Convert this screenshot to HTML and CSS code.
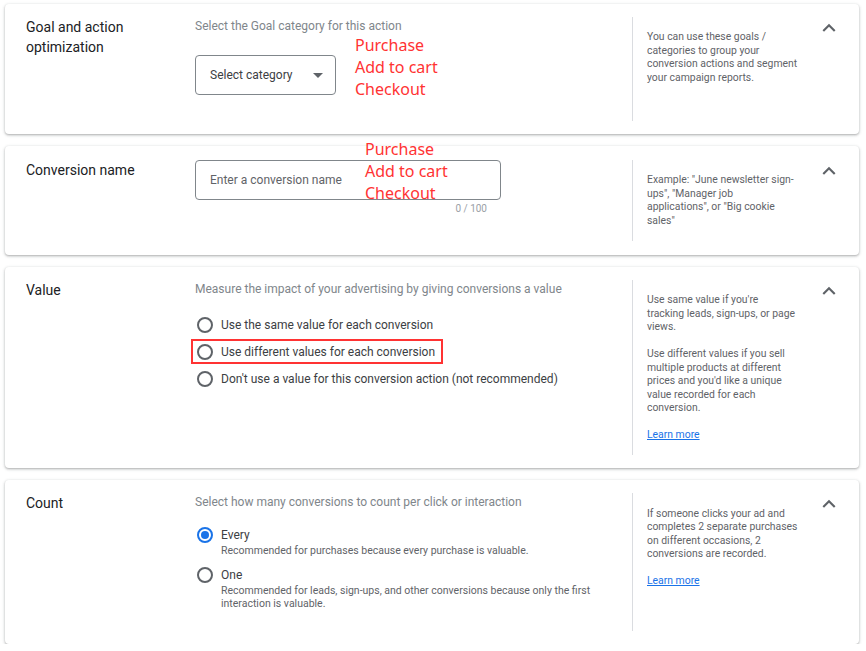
FILE: index.html
```html
<!DOCTYPE html>
<html lang="en">
<head>
<meta charset="utf-8">
<title>Conversion action settings</title>
<link rel="stylesheet" href="styles.css">
</head>
<body>
<main class="page">

  <section class="card">
    <div class="title">Goal and action optimization</div>
    <div class="main">
      <div class="desc">Select the Goal category for this action</div>
      <div class="select">
        <span>Select category</span>
        <svg class="caret" width="10" height="5" viewBox="0 0 10 5"><path d="M0 0h10L5 5z" fill="#5f6368"/></svg>
      </div>
      <div class="note note-1">Purchase<br>Add to cart<br>Checkout</div>
    </div>
    <aside class="help">
      <p>You can use these goals / categories to group your conversion actions and segment your campaign reports.</p>
    </aside>
    <div class="toggle">
      <svg width="26" height="26" viewBox="0 0 24 24"><path d="M7.41 15.41L12 10.83l4.59 4.58L18 14l-6-6-6 6z" fill="#5f6368"/></svg>
    </div>
  </section>

  <section class="card card-name">
    <div class="title">Conversion name</div>
    <div class="main">
      <div class="input">Enter a conversion name</div>
      <div class="counter">0 / 100</div>
      <div class="note note-2">Purchase<br>Add to cart<br>Checkout</div>
    </div>
    <aside class="help">
      <p class="narrow">Example: "June newsletter sign-ups", "Manager job applications", or "Big cookie sales"</p>
    </aside>
    <div class="toggle">
      <svg width="26" height="26" viewBox="0 0 24 24"><path d="M7.41 15.41L12 10.83l4.59 4.58L18 14l-6-6-6 6z" fill="#5f6368"/></svg>
    </div>
  </section>

  <section class="card">
    <div class="title">Value</div>
    <div class="main">
      <div class="desc">Measure the impact of your advertising by giving conversions a value</div>
      <div class="options">
        <div class="opt"><span class="radio"></span><span>Use the same value for each conversion</span></div>
        <div class="opt opt-marked"><span class="radio"></span><span>Use different values for each conversion</span></div>
        <div class="opt"><span class="radio"></span><span>Don't use a value for this conversion action (not recommended)</span></div>
      </div>
    </div>
    <aside class="help">
      <p>Use same value if you're tracking leads, sign-ups, or page views.</p>
      <p>Use different values if you sell multiple products at different prices and you'd like a unique value recorded for each conversion.</p>
      <p><a href="#">Learn more</a></p>
    </aside>
    <div class="toggle">
      <svg width="26" height="26" viewBox="0 0 24 24"><path d="M7.41 15.41L12 10.83l4.59 4.58L18 14l-6-6-6 6z" fill="#5f6368"/></svg>
    </div>
  </section>

  <section class="card card-count">
    <div class="title">Count</div>
    <div class="main">
      <div class="desc">Select how many conversions to count per click or interaction</div>
      <div class="choices">
        <div class="choice">
          <span class="radio checked"></span>
          <div class="choice-text">
            <div class="choice-label">Every</div>
            <div class="choice-sub">Recommended for purchases because every purchase is valuable.</div>
          </div>
        </div>
        <div class="choice">
          <span class="radio"></span>
          <div class="choice-text">
            <div class="choice-label">One</div>
            <div class="choice-sub">Recommended for leads, sign-ups, and other conversions because only the first interaction is valuable.</div>
          </div>
        </div>
      </div>
    </div>
    <aside class="help">
      <p>If someone clicks your ad and completes 2 separate purchases on different occasions, 2 conversions are recorded.</p>
      <p><a href="#">Learn more</a></p>
    </aside>
    <div class="toggle">
      <svg width="26" height="26" viewBox="0 0 24 24"><path d="M7.41 15.41L12 10.83l4.59 4.58L18 14l-6-6-6 6z" fill="#5f6368"/></svg>
    </div>
  </section>

</main>
</body>
</html>
```

FILE: styles.css
```css
* { box-sizing: border-box; }

html, body {
  margin: 0;
  padding: 0;
  background: #ffffff;
}

body {
  font-family: Roboto, "Liberation Sans", Arial, sans-serif;
  color: #3c4043;
}

.page {
  display: flex;
  flex-direction: column;
  gap: 12px;
  padding: 4px 7px 0 5px;
}

.card {
  display: flex;
  align-items: stretch;
  background: #fff;
  border-radius: 4px;
  padding: 13px 0 13px 21px;
  box-shadow: 0 1px 2px rgba(60, 64, 67, 0.3), 0 1px 3px 1px rgba(60, 64, 67, 0.12);
}

.card-name {
  padding-top: 14px;
  padding-bottom: 14px;
}

.title {
  flex: 0 0 169px;
  font-size: 14px;
  line-height: 20px;
  color: #202124;
  padding-right: 40px;
}

.main {
  position: relative;
  flex: 0 0 437px;
  padding-bottom: 26px;
}

.card-count .main {
  padding-bottom: 21px;
}

.desc {
  padding-top: 1px;
  font-size: 12px;
  line-height: 16px;
  color: #80868b;
}

.select {
  margin-top: 21px;
  width: 141px;
  height: 40px;
  border: 1px solid #80868b;
  border-radius: 4px;
  display: flex;
  align-items: center;
  justify-content: space-between;
  padding: 0 12px 0 14px;
  font-size: 12px;
  color: #3c4043;
}

.input {
  width: 306px;
  height: 40px;
  border: 1px solid #80868b;
  border-radius: 4px;
  display: flex;
  align-items: center;
  padding: 0 14px;
  font-size: 12px;
  color: #5f6368;
}

.counter {
  width: 306px;
  text-align: right;
  padding-right: 14px;
  margin-top: 3px;
  font-size: 10px;
  line-height: 12px;
  color: #9aa0a6;
}

.note {
  position: absolute;
  font-family: "Noto Sans", "Open Sans", sans-serif;
  font-size: 16px;
  line-height: 22px;
  color: #ff3333;
}

.note-1 { left: 160px; top: 17px; }
.note-2 { left: 170px; top: -22px; }

.options {
  margin-top: 15px;
  display: flex;
  flex-direction: column;
  gap: 2px;
}

.opt {
  display: flex;
  align-items: center;
  gap: 8px;
  width: fit-content;
  height: 25px;
  margin-left: -4px;
  padding: 0 6px 0 4px;
  border: 2px solid transparent;
  font-size: 12px;
  color: #3c4043;
}

.opt-marked {
  border-color: #ff3333;
}

.radio {
  flex: 0 0 16px;
  width: 16px;
  height: 16px;
  border: 2px solid #5f6368;
  border-radius: 50%;
  display: flex;
  align-items: center;
  justify-content: center;
}

.radio.checked {
  border-color: #1a73e8;
}

.radio.checked::after {
  content: "";
  width: 8px;
  height: 8px;
  border-radius: 50%;
  background: #1a73e8;
}

.choices {
  margin-top: 16px;
  display: flex;
  flex-direction: column;
  gap: 9px;
}

.choice {
  display: flex;
  align-items: flex-start;
  gap: 8px;
  margin-left: 2px;
}

.choice .radio {
  margin-top: 1px;
}

.choice-label {
  font-size: 12px;
  line-height: 18px;
  color: #3c4043;
}

.choice-sub {
  font-size: 10.5px;
  line-height: 13px;
  color: #5f6368;
  max-width: 400px;
}

.help {
  flex: 0 0 170px;
  border-left: 1px solid #dadce0;
  padding: 13px 0 13px 14px;
  font-size: 10.4px;
  line-height: 13.5px;
  color: #5f6368;
}

.card-count .help {
  padding-top: 14px;
}

.help p {
  margin: 0 0 13.5px;
  width: 151px;
}

.help p.narrow {
  width: 149px;
}

.help p:last-child {
  margin-bottom: 0;
}

.help a {
  color: #1a73e8;
  text-decoration: underline;
}

.toggle {
  flex: 0 0 57px;
  padding-left: 14px;
  margin-top: -2px;
}

.toggle svg {
  display: block;
}
```
